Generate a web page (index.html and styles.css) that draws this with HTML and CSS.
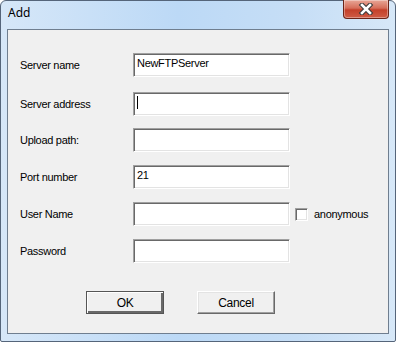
FILE: index.html
```html
<!DOCTYPE html>
<html lang="en">
<head>
  <meta charset="UTF-8" />
  <title>Add</title>
  <link rel="stylesheet" href="styles.css">
</head>
<body>

  <div class="window">
    <div class="titlebar">
      <span class="title">Add</span>
      <div class="close-btn">
        <svg width="18" height="12" viewBox="0 0 18 12">
          <path d="M5 2 L13 10 M13 2 L5 10" stroke="#3a3a3a" stroke-width="4.6" stroke-linecap="square"/>
          <path d="M5 2 L13 10 M13 2 L5 10" stroke="#ffffff" stroke-width="2.6" stroke-linecap="square"/>
        </svg>
      </div>
    </div>

    <div class="client">
      <div class="form">
        <div class="row">
          <label>Server name</label>
          <div class="field">NewFTPServer</div>
        </div>
        <div class="row row-wide">
          <label>Server address</label>
          <div class="field"><span class="caret"></span></div>
        </div>
        <div class="row">
          <label>Upload path:</label>
          <div class="field"></div>
        </div>
        <div class="row">
          <label>Port number</label>
          <div class="field">21</div>
        </div>
        <div class="row">
          <label>User Name</label>
          <div class="field"></div>
          <span class="checkbox"></span>
          <span class="check-label">anonymous</span>
        </div>
        <div class="row">
          <label>Password</label>
          <div class="field"></div>
        </div>
      </div>

      <div class="buttons">
        <div class="btn btn-default"><span>OK</span></div>
        <div class="btn"><span>Cancel</span></div>
      </div>
    </div>
  </div>

</body>
</html>
```

FILE: styles.css
```css
body {
  margin: 0;
  width: 396px;
  height: 342px;
  overflow: hidden;
  background: #ffffff;
  font-family: 'Liberation Sans', Arial, sans-serif;
  font-size: 11px;
  letter-spacing: -0.3px;
  color: #000;
}
.window {
  box-sizing: border-box;
  width: 396px;
  height: 342px;
  border: 1px solid #55657a;
  border-radius: 6px 6px 2px 2px;
  background: linear-gradient(to right, #d6e7f8, #bcd9f6 45%, #c6def6 75%, #d7e8f8);
  display: flex;
  flex-direction: column;
}
.titlebar {
  height: 28px;
  display: flex;
  align-items: flex-start;
  justify-content: space-between;
  padding-left: 7px;
  padding-right: 6px;
}
.title {
  font-family: 'Noto Sans', 'Open Sans', sans-serif;
  font-size: 12px;
  letter-spacing: 0;
  margin-top: 3px;
  color: #000;
}
.close-btn {
  box-sizing: border-box;
  width: 46px;
  height: 19px;
  margin-top: -1px;
  border: 1px solid #6b2418;
  border-top: none;
  border-radius: 0 0 4px 4px;
  background: linear-gradient(to bottom, #e8a797, #d66e5a 45%, #c4402a 55%, #cf5c45);
  box-shadow: inset 0 0 0 1px rgba(255,255,255,0.35);
  display: flex;
  align-items: center;
  justify-content: center;
}
.client {
  flex: 1;
  margin: 0 6px 7px 6px;
  border: 1px solid #6f7e8f;
  background: #f0f0f0;
  display: flex;
  flex-direction: column;
}
.form {
  display: flex;
  flex-direction: column;
  gap: 13px;
  padding: 23px 0 0 12px;
}
.row {
  display: flex;
  align-items: center;
  height: 24px;
}
.row-wide {
  margin-top: 2px;
  margin-bottom: -1px;
}
.row label {
  width: 113px;
}
.field {
  box-sizing: border-box;
  width: 157px;
  height: 24px;
  background: #fff;
  border-top: 1px solid #a0a0a0;
  border-left: 1px solid #a0a0a0;
  border-right: 1px solid #ffffff;
  border-bottom: 1px solid #ffffff;
  box-shadow: inset 1px 1px 0 #696969, inset -1px -1px 0 #e3e3e3;
  padding: 3px 3px 0 3px;
  line-height: 13px;
}
.caret {
  display: inline-block;
  width: 1px;
  height: 13px;
  background: #000;
}
.checkbox {
  box-sizing: border-box;
  width: 13px;
  height: 13px;
  margin-left: 5px;
  background: #fff;
  border-top: 1px solid #a0a0a0;
  border-left: 1px solid #a0a0a0;
  border-right: 1px solid #fff;
  border-bottom: 1px solid #fff;
  box-shadow: inset 1px 1px 0 #696969, inset -1px -1px 0 #e3e3e3;
}
.check-label {
  margin-left: 6px;
}
.buttons {
  display: flex;
  gap: 33px;
  padding: 28px 0 0 78px;
}
.btn {
  box-sizing: border-box;
  width: 78px;
  height: 23px;
  background: #f0f0f0;
  border-top: 1px solid #ffffff;
  border-left: 1px solid #ffffff;
  border-right: 1px solid #696969;
  border-bottom: 1px solid #696969;
  box-shadow: inset -1px -1px 0 #a0a0a0, inset 1px 1px 0 #e3e3e3;
  display: flex;
  align-items: center;
  justify-content: center;
  font-size: 12px;
}
.btn-default {
  border: 1px solid #555;
  box-shadow: inset 1px 1px 0 #fff, inset -2px -2px 0 #696969, inset -1px -1px 0 #696969;
}
```
